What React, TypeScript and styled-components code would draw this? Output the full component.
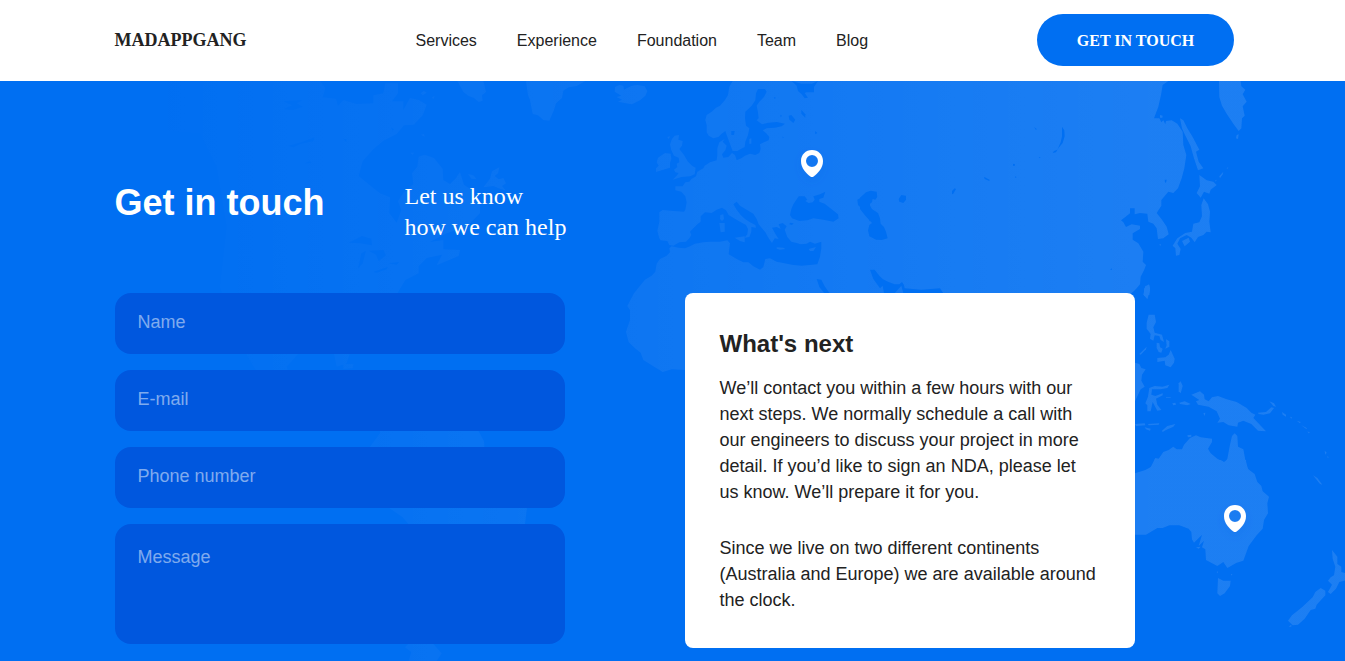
import React from "react";
import styled, { createGlobalStyle } from "styled-components";

const sans = `"Liberation Sans", Arial, sans-serif`;
const serif = `"Liberation Serif", "Times New Roman", serif`;

const GlobalStyle = createGlobalStyle`
  *, *::before, *::after { box-sizing: border-box; }
  body { margin: 0; background: #fff; color: #222; font-family: ${sans}; }
`;

const Page = styled.div`
  height: 661px;
  overflow: hidden;
`;

const Header = styled.header`
  display: grid;
  grid-template-columns: 301px 1fr auto;
  align-items: center;
  height: 81px;
  padding: 0 111px 1px 114.5px;
  background: #fff;
`;

const Logo = styled.a`
  font: bold 18px/20px ${serif};
  color: #222;
`;

const Nav = styled.nav`
  display: flex;
  gap: 40px;
`;

const NavLink = styled.a`
  font-size: 16px;
  line-height: 20px;
  padding-top: 1px;
  color: #222;
`;

const CallToAction = styled.button`
  width: 197px;
  height: 52px;
  padding: 2px 0 0;
  border: 0;
  border-radius: 26px;
  background: #006ff2;
  color: #fff;
  font: bold 16px/20px ${serif};
`;

const Hero = styled.main`
  position: relative;
  height: 580px;
  background: #006ff2;
`;

const MapLayer = styled.svg`
  position: absolute;
  inset: 0;
  display: block;
`;

const Content = styled.div`
  position: relative;
  padding: 99px 0 0 115px;
`;

const Intro = styled.div`
  display: flex;
  height: 113px;
`;

const Title = styled.h1`
  width: 290px;
  margin: 1px 0 0 -0.5px;
  font-size: 36px;
  line-height: 44px;
  color: #fff;
`;

const Subtitle = styled.p`
  margin: 1px 0 0;
  font: 24px/31px ${serif};
  color: #fff;
`;

const Columns = styled.div`
  display: grid;
  grid-template-columns: 450px 450px;
  column-gap: 120px;
  align-items: start;
`;

const Form = styled.form`
  display: flex;
  flex-direction: column;
  gap: 16px;
`;

const Field = styled.input`
  display: block;
  width: 100%;
  height: 61px;
  padding: 0 22.5px 3px;
  border: 0;
  border-radius: 16px;
  background: #0057de;
  color: #fff;
  font: 18px/26px ${sans};
  outline: none;

  &::placeholder {
    color: rgba(255, 255, 255, 0.5);
    opacity: 1;
  }
`;

const MessageField = styled(Field)`
  height: 120px;
  padding: 20px 22.5px;
  resize: none;
`;

const Card = styled.section`
  height: 355px;
  padding: 35px 34.5px;
  border-radius: 8px;
  background: #fff;
`;

const CardTitle = styled.h2`
  margin: 0 0 15px;
  font-size: 24px;
  line-height: 32px;
  color: #222;
`;

const CardText = styled.p`
  margin: 0 0 30px;
  font-size: 18px;
  line-height: 26px;
  color: #222;
  white-space: nowrap;
`;

type Region = { x: number; y: number; land?: string[]; water?: string[] };

/* Outlines are stored region by region, in thirds of a pixel from the region's origin. */
const regions: Region[] = [
  {
    // Europe, north Africa and western Asia
    x: 610,
    y: 75,
    land: [
      "368,18 358,35 354,60 345,75 330,92 318,98 305,110 290,120 286,135 290,150 290,172 296,182 310,190 325,186 335,176 346,168 350,180 356,196 362,212 368,228 382,228 392,222 404,216 406,200 414,180 418,160 408,152 405,130 406,110 425,92 436,76 438,55 444,42 465,42 470,50 462,66 448,80 440,92 444,112 446,130 440,136 456,148 475,143 500,141 525,146 515,154 495,158 470,160 458,166 470,176 478,186 476,196 462,202 450,208 452,222 448,234 436,240 420,236 405,242 394,250 380,256 375,240 366,234 355,246 340,248 336,238 346,226 350,212 338,200 344,192 328,202 322,220 322,240 320,256 300,262 284,272 280,280 262,290 258,304 244,312 238,320 226,322 218,334 196,334 196,346 214,350 226,364 230,382 226,404 222,410 190,408 158,405 148,412 148,440 142,468 148,490 152,496 172,498 178,510 190,512 208,502 228,500 238,490 244,480 240,470 250,460 262,448 272,440 272,424 285,412 305,414 320,404 336,398 348,406 356,420 372,430 390,440 408,450 414,462 412,478 404,488 418,486 424,470 424,456 438,458 436,450 420,442 405,432 392,420 380,404 370,388 380,380 390,392 410,404 430,416 440,432 446,448 456,460 466,472 476,490 486,504 494,490 506,492 498,480 486,458 500,456 512,462 506,448 518,444 530,454 524,464 532,486 544,500 560,504 572,508 590,506 600,500 615,506 634,500 634,520 630,545 622,568 600,570 575,572 550,570 500,560 480,550 466,552 460,576 450,584 430,574 415,562 400,562 380,552 356,538 358,520 360,505 352,496 330,500 300,500 280,502 255,506 240,514 225,520 205,518 185,514 178,520 180,532 170,542 150,552 140,566 136,590 125,602 105,614 92,630 72,655 52,693 60,705 60,735 48,770 56,801 75,820 92,833 100,855 135,877 158,891 185,883 225,885 300,885 1500,885 1500,18",
      "15,36 28,30 40,32 42,44 50,40 66,32 82,30 104,34 112,48 106,62 90,76 66,88 44,84 24,80 36,74 20,66 34,62 14,50",
      "194,182 207,180 205,194 218,198 216,212 208,222 222,240 234,260 246,272 257,278 254,298 240,304 214,306 188,314 200,302 206,294 196,292 192,284 202,276 200,266 208,262 206,248 192,242 184,226 180,208 186,192",
      "165,234 182,236 184,252 180,264 180,278 160,284 138,291 138,280 146,272 140,262 144,248",
      "172,186 180,184 176,192",
      "331,420 340,418 342,432 336,438 330,432",
      "328,444 344,444 344,470 332,472",
      "374,488 404,484 404,502 390,498",
      "418,192 424,190 424,206 418,206",
      "500,517 520,518 526,522 510,524 500,521",
      "596,522 618,516 610,528 600,528",
    ],
    water: [
      "545,18 560,32 564,48 575,58 584,70 594,68 584,54 590,52 612,52 612,36 624,18 606,26 575,26",
      "566,364 584,364 592,374 586,378 596,384 608,382 614,374 610,364 630,358 646,350 640,368 628,372 628,380 644,386 664,402 684,418 686,430 670,440 640,434 610,430 592,436 568,438 546,430 540,420 544,402 550,388",
      "536,122 544,120 556,134 550,144 538,134",
      "574,104 586,118 586,128 574,116",
      "511,119 516,122 512,127",
      "540,443 551,445 546,450 538,448",
      "364,168 374,168 372,180 364,180",
      "615,168 622,174 616,178",
      "780,350 766,360 742,374 744,390 766,412 780,440",
      "620,612 634,614 644,634 660,656 644,656 628,636",
      "491,66 498,68 494,72",
      "518,184 521,188 518,190",
    ],
  },
  {
    // East Asia
    x: 1090,
    y: 75,
    land: [
      "0,655 124,655 138,642 150,628 152,605 162,586 168,570 158,560 160,530 145,505 128,494 128,475 150,462 150,452 125,448 108,456 100,442 93,436 106,426 120,415 120,400 134,400 134,418 150,414 172,416 175,440 190,446 200,460 204,492 220,490 236,478 230,455 216,434 200,414 214,392 214,375 235,350 250,354 264,340 275,310 283,280 289,240 280,210 278,170 262,146 245,136 228,138 226,148 220,136 214,142 208,130 192,130 205,95 213,60 218,30 235,18 0,18",
      "387,18 452,18 454,34 466,44 458,58 470,80 458,94 464,122 456,130 454,160 446,168 430,146 410,116 396,92 388,66",
      "270,130 280,136 292,160 308,186 328,224 318,230 326,260 340,280 324,286 312,250 302,214 284,178 276,160",
      "328,300 350,316 370,320 380,330 362,344 358,356 342,350 332,368 320,354 330,334",
      "341,370 354,388 360,410 358,440 362,472 350,470 340,480 324,486 314,502 304,488 290,480 270,490 262,506 272,522 268,540 258,542 256,520 248,512 262,490 286,474 306,470 310,446 328,442 336,424 334,390",
      "276,498 296,488 300,500 284,514",
      "440,180 446,178 444,192 438,190",
      "388,304 400,290 398,298 390,310",
      "376,316 380,314 377,320",
      "410,280 415,276 412,282",
      "164,640 176,628 180,640 178,660 160,660",
      "208,508 213,508 211,513",
      "210,120 218,122 217,128 210,128",
    ],
    water: ["224,314 230,314 228,324 225,322"],
  },
  {
    // Central Asia
    x: 860,
    y: 75,
    water: [
      "0,368 18,352 32,347 50,350 52,366 46,374 38,372 36,382 28,388 36,402 54,414 60,430 62,446 72,456 78,470 83,490 66,495 48,494 28,484 24,466 28,450 36,444 16,422 0,402",
      "116,372 124,360 138,362 138,374 130,384 118,380",
      "30,584 44,584 58,602 68,612 84,620 104,628 118,628 126,621 132,630 134,640 184,644 240,640 250,655 130,655 124,632 104,655 72,655 68,632 60,640 40,612",
      "606,155 613,166 614,184 608,204 596,218 588,232 578,234 582,228 592,224 602,202 606,184",
      "276,348 284,340 288,342 280,356 276,358",
      "372,305 380,310 389,314 388,318 374,312",
      "459,266 465,268 464,273 459,272",
      "522,156 530,162 528,165",
      "536,246 541,246 540,250",
      "465,304 470,306 466,309",
      "750,584 756,580 756,584",
    ],
  },
  {
    // South-east Asia and New Guinea
    x: 1130,
    y: 280,
    land: [
      "0,0 30,0 28,10 12,32 0,42",
      "46,18 58,14 60,30 52,58 42,46 42,30",
      "56,104 74,104 78,126 70,142 74,158 96,164 102,186 92,180 88,168 74,166 70,182 60,176 62,162 50,146 50,128",
      "108,178 118,184 118,200 106,206 110,196",
      "80,188 88,190 90,202 98,206 94,218 86,216 80,204",
      "82,234 106,232 116,224 122,210 134,236 132,248 122,262 106,256 104,242 82,246",
      "28,222 50,200 48,208 32,224",
      "15,248 28,252 34,264 47,268 36,284 34,302 44,320 32,328 15,364",
      "58,324 74,318 98,320 118,314 112,324 92,328 66,328 64,344 76,348 98,340 98,346 78,356 82,374 94,390 82,392 68,366 62,394 52,394 52,376 46,370 54,350",
      "146,310 152,304 158,318 152,340 146,334",
      "148,368 164,364 182,372 172,376 150,372",
      "127,370 136,368 138,374 130,376",
      "108,352 122,352 122,354 108,354",
      "15,432 44,430 46,436 18,438",
      "54,432 88,430 86,434 56,436",
      "44,442 62,446 60,452 48,448",
      "96,452 112,438 136,432 130,440 108,450 98,456",
      "184,344 210,334 222,344 224,358 236,364 246,352 264,348 290,358 320,366 350,384 364,398 376,404 370,414 408,454 384,452 364,432 340,422 324,428 322,440 296,436 280,426 262,428 270,416 260,394 236,380 204,374 198,364 208,360",
      "384,398 408,396 424,382 432,384 420,400 400,404 386,402",
      "418,364 432,370 438,380 430,378",
      "456,396 468,404 468,410 458,404",
      "480,410 486,412 484,416",
      "500,422 512,426 510,430",
      "514,436 530,444 530,448",
      "532,454 540,458 536,460",
      "584,512 590,518 586,524",
      "592,528 596,532 593,534",
      "220,400 226,398 224,408",
      "172,466 184,464 184,470 174,472",
      "58,570 76,534 86,536 100,516 116,510 130,500 140,508 156,508 162,494 180,474 198,466 212,472 246,476 246,486 234,506 242,520 262,536 284,548 292,536 300,494 306,468 314,460 322,468 324,500 340,508 346,540 356,572",
    ],
  },
  {
    // Australia and New Zealand
    x: 1130,
    y: 460,
    land: [
      "0,42 15,40 46,30 64,20 72,8 74,-2 272,0 282,6 290,0 348,0 350,24 374,42 382,66 394,78 398,94 417,110 412,130 414,160 402,180 398,206 380,226 356,258 340,302 320,308 292,324 280,306 262,318 228,300 226,268 216,262 222,242 206,258 216,224 192,248 186,238 184,216 176,206 148,196 118,196 98,204 82,204 48,224 0,224",
      "198,262 212,260 206,266",
      "264,354 280,362 302,362 300,378 284,400 270,408 262,400",
      "260,336 264,334 263,340",
      "303,342 307,342 305,347",
      "606,270 622,290 622,312 634,320 634,336 650,340 650,360 628,366 618,386 602,402 594,396 606,374 594,362 602,352 612,346 616,320 608,296",
      "572,384 586,392 586,406 560,434 556,446 542,450 524,476 504,494 488,496 474,482 486,466 516,442 548,412 556,396",
      "476,500 484,494 484,500",
      "549,46 562,54 577,74 570,72",
    ],
  },
  {
    // North Atlantic and eastern Canada
    x: 400,
    y: 0,
    land: [
      "378,243 556,243 530,258 506,262 490,272 486,294 468,310 462,330 448,362 430,360 414,346 398,342 390,300 384,286",
      "172,243 250,243 258,276 246,286 248,302 236,306 222,294 206,288 190,276",
      "62,280 72,272 80,278 68,286",
      "96,292 104,288 100,298",
      "62,404 72,402 74,410",
      "204,522 220,526 230,538 214,536",
      "250,562 270,536 276,514 298,502 294,520 284,528 296,538 310,534 318,550 306,558 318,572 294,564 280,558",
    ],
  },
  {
    // North America
    x: 0,
    y: 0,
    land: [
      "330,243 960,243 976,264 968,292 1008,296 1014,318 1030,300 1070,312 1120,310 1120,286 1150,280 1156,250 1194,250 1194,280 1176,304 1210,304 1210,330 1230,294 1256,300 1280,314 1268,346 1242,374 1212,376 1190,402 1150,422 1120,448 1088,484 1076,528 1110,556 1140,580 1170,592 1168,640 1190,668 1204,630 1194,604 1210,578 1240,552 1236,520 1252,500 1256,470 1274,464 1302,474 1328,506 1330,540 1350,552 1366,536 1380,516 1392,554 1416,570 1440,610 1440,640 1400,680 1340,700 1290,726 1330,720 1330,748 1380,750 1376,768 1310,796 1326,764 1280,774 1256,798 1256,820 1216,840 1192,880 1150,960 1060,1030 1040,1090 1010,1100 1000,1050 900,1056 860,1100 890,1200 780,1130 700,1000 660,860 680,680 650,500 600,400 480,390 340,480 430,390 380,330",
      "1230,458 1242,458 1238,464",
      "1030,1092 1060,1092 1058,1105 1030,1107",
    ],
    water: [
      "850,304 908,300 890,310 908,320 880,330 850,328 876,316",
      "864,438 906,426 944,412 940,424 900,432 880,442",
      "914,490 930,484 934,490",
      "1030,416 1040,418 1038,426",
      "1172,382 1182,388 1178,392",
      "1046,728 1086,708 1114,716 1116,736 1080,730",
      "1074,806 1084,760 1098,752 1088,790",
      "1106,752 1150,750 1158,766 1136,784 1128,764",
      "1120,816 1164,800 1160,808 1130,818",
      "1164,790 1198,786 1190,794",
    ],
  },
  {
    // South America
    x: 340,
    y: 280,
    land: [
      "120,440 400,440 416,454 432,484 434,510 500,560 560,620 561,684 555,732 480,850 400,930 330,1000 280,1092 305,1120 290,1143 206,1143 214,1116 195,1102 205,1092 205,732 188,712 148,684 80,600 90,500 120,460",
    ],
  },
];

const pins = [
  { x: 801, y: 150 },
  { x: 1224, y: 505 },
];

const WorldMap = () => (
  <MapLayer width="1345" height="580" viewBox="0 81 1345 580" aria-hidden="true">
    <defs>
      <linearGradient id="fade" gradientUnits="userSpaceOnUse" x1="150" y1="0" x2="1150" y2="0">
        <stop offset="0" stopColor="#fff" stopOpacity="0" />
        <stop offset="1" stopColor="#fff" stopOpacity="0.112" />
      </linearGradient>
      <filter id="pinShadow" x="-100%" y="-100%" width="300%" height="300%">
        <feDropShadow dx="0" dy="4" stdDeviation="5" floodColor="#0057de" floodOpacity="0.16" />
      </filter>
      <mask id="land" maskUnits="userSpaceOnUse" x="0" y="81" width="1345" height="580">
        {regions.map((region) => (
          <g
            key={`${region.x}-${region.y}`}
            transform={`translate(${region.x} ${region.y}) scale(0.333333)`}
            strokeLinejoin="round"
          >
            {region.land?.map((points) => (
              <polygon key={points} points={points} fill="#fff" />
            ))}
            {region.water?.map((points) => (
              <polygon key={points} points={points} fill="#000" />
            ))}
          </g>
        ))}
      </mask>
    </defs>
    <rect x="0" y="81" width="1345" height="580" fill="url(#fade)" mask="url(#land)" />
    {pins.map((pin) => (
      <path
        key={pin.x}
        transform={`translate(${pin.x} ${pin.y})`}
        filter="url(#pinShadow)"
        fill="#fff"
        fillRule="evenodd"
        d="M11 0C4.7 0 0 4.8 0 11c0 7.400 5.200 12.300 9.400 15.400a2.700 2.700 0 0 0 3.200 0C16.800 23.300 22 18.400 22 11 22 4.800 17.300 0 11 0Zm0 5a6 6 0 1 1 0 12 6 6 0 0 1 0-12Z"
      />
    ))}
  </MapLayer>
);

const links = ["Services", "Experience", "Foundation", "Team", "Blog"];
const fields = ["Name", "E-mail", "Phone number"];

export default function App() {
  return (
    <Page>
      <GlobalStyle />
      <Header>
        <Logo>MADAPPGANG</Logo>
        <Nav>
          {links.map((link) => (
            <NavLink key={link}>{link}</NavLink>
          ))}
        </Nav>
        <CallToAction type="button">GET IN TOUCH</CallToAction>
      </Header>
      <Hero>
        <WorldMap />
        <Content>
          <Intro>
            <Title>Get in touch</Title>
            <Subtitle>
              Let us know
              <br />
              how we can help
            </Subtitle>
          </Intro>
          <Columns>
            <Form>
              {fields.map((label) => (
                <Field key={label} placeholder={label} />
              ))}
              <MessageField as="textarea" placeholder="Message" />
            </Form>
            <Card>
              <CardTitle>What's next</CardTitle>
              <CardText>
                We’ll contact you within a few hours with our
                <br />
                next steps. We normally schedule a call with
                <br />
                our engineers to discuss your project in more
                <br />
                detail. If you’d like to sign an NDA, please let
                <br />
                us know. We’ll prepare it for you.
              </CardText>
              <CardText>
                Since we live on two different continents
                <br />
                (Australia and Europe) we are available around
                <br />
                the clock.
              </CardText>
            </Card>
          </Columns>
        </Content>
      </Hero>
    </Page>
  );
}
